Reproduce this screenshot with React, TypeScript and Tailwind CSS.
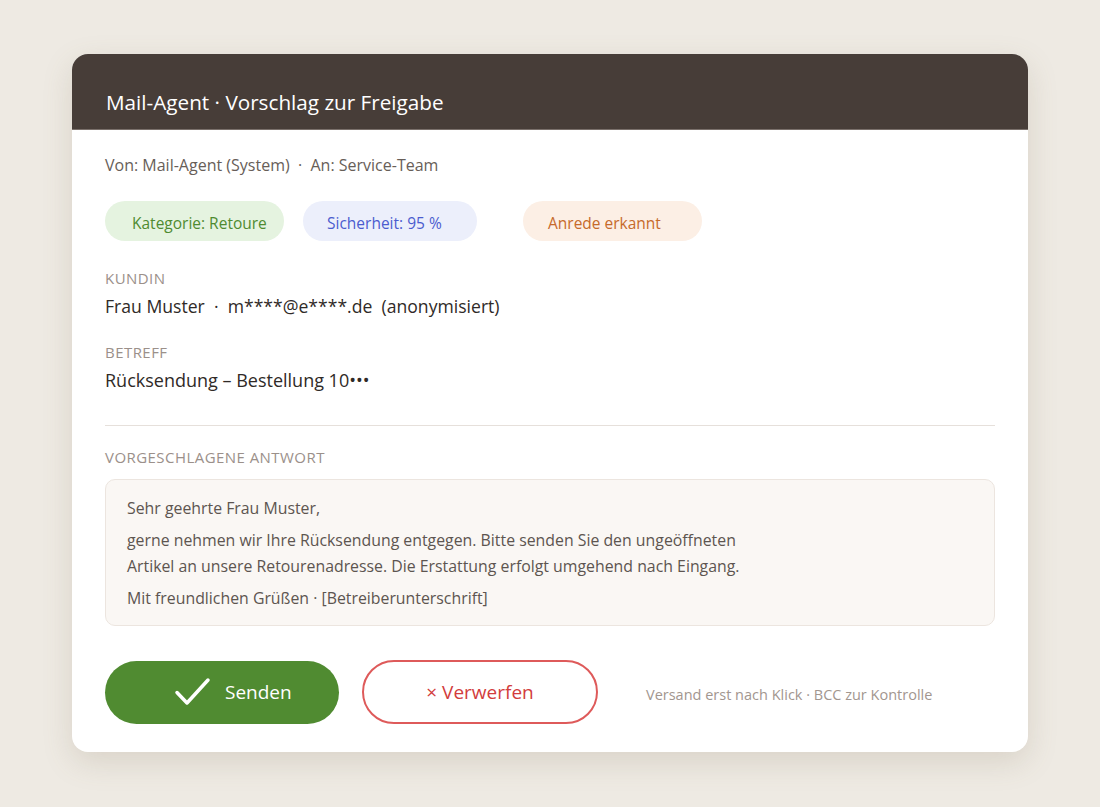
import React from 'react';

const Label: React.FC<{ children: React.ReactNode; className?: string }> = ({ children, className = '' }) => (
  <div className={`text-[15px] uppercase tracking-[0.03em] text-[#9b908a] leading-[18px] ${className}`}>{children}</div>
);

const App: React.FC = () => {
  return (
    <div
      className="w-[1100px] h-[807px] bg-[#eeeae3] pt-[54px] pl-[72px]"
      style={{ fontFamily: '"Open Sans", "Noto Sans", sans-serif' }}
    >
      <div className="w-[956px] h-[698px] bg-white rounded-[16px] overflow-hidden shadow-[0_10px_30px_rgba(120,105,80,0.18)]">
        <div className="h-[76px] bg-[#473d38] border-b border-[#7a706b] flex items-end pb-[13px] px-[34px]">
          <h1 className="text-[20.7px] leading-[28px] text-white">Mail-Agent · Vorschlag zur Freigabe</h1>
        </div>

        <div className="px-[33px] pt-[25px]">
          <div className="text-[16px] leading-[20px] text-[#675e58] whitespace-pre">
            Von: Mail-Agent (System)  ·  An: Service-Team
          </div>

          <div className="flex mt-[26px] text-[15.5px] leading-[20px]">
            <span className="w-[179px] h-[40px] rounded-full bg-[#e5f3e0] text-[#4f8b31] flex items-center pl-[27px] pt-[3px]">
              Kategorie: Retoure
            </span>
            <span className="ml-[19px] w-[174px] h-[40px] rounded-full bg-[#eceffb] text-[#4b5ccf] flex items-center pl-[24px] pt-[3px]">
              Sicherheit: 95 %
            </span>
            <span className="ml-[46px] w-[179px] h-[40px] rounded-full bg-[#fcefe5] text-[#c66a2b] flex items-center pl-[25px] pt-[3px]">
              Anrede erkannt
            </span>
          </div>

          <Label className="mt-[28px]">Kundin</Label>
          <div className="mt-[8px] text-[17.6px] leading-[22px] text-[#2f2a27] whitespace-pre">
            Frau Muster  ·  m****@e****.de  (anonymisiert)
          </div>

          <Label className="mt-[26px]">Betreff</Label>
          <div className="mt-[8px] text-[18px] leading-[22px] text-[#2f2a27]">Rücksendung – Bestellung 10•••</div>

          <div className="mt-[34px] h-px bg-[#e6e0db] w-[890px]" />

          <Label className="mt-[22px]">Vorgeschlagene Antwort</Label>

          <div className="mt-[13px] w-[890px] h-[147px] rounded-[10px] bg-[#faf7f4] border border-[#ece5df] px-[21px] pt-[17px] text-[15.85px] text-[#5d5550]">
            <p className="leading-[22px]">Sehr geehrte Frau Muster,</p>
            <p className="mt-[8px] leading-[26px]">
              gerne nehmen wir Ihre Rücksendung entgegen. Bitte senden Sie den ungeöffneten
              <br />
              Artikel an unsere Retourenadresse. Die Erstattung erfolgt umgehend nach Eingang.
            </p>
            <p className="mt-[8px] leading-[22px]">Mit freundlichen Grüßen · [Betreiberunterschrift]</p>
          </div>

          <div className="mt-[34px] flex items-center">
            <button className="w-[234px] h-[63px] rounded-full bg-[#508b31] text-white text-[19px] flex items-center pl-[69px] gap-[14px]">
              <svg width="37" height="30" viewBox="0 0 37 30" fill="none">
                <path d="M3 15.5 L13 26 L34 3" stroke="white" strokeWidth="3.5" strokeLinecap="round" strokeLinejoin="round" />
              </svg>
              <span>Senden</span>
            </button>
            <button className="ml-[23px] w-[236px] h-[64px] rounded-full border-2 border-[#de5a5a] text-[#d23c3c] text-[19px] flex items-center justify-center">
              × Verwerfen
            </button>
            <span className="ml-[48px] mt-[5px] text-[14.5px] text-[#a2968f]">Versand erst nach Klick · BCC zur Kontrolle</span>
          </div>
        </div>
      </div>
    </div>
  );
};

export default App;
